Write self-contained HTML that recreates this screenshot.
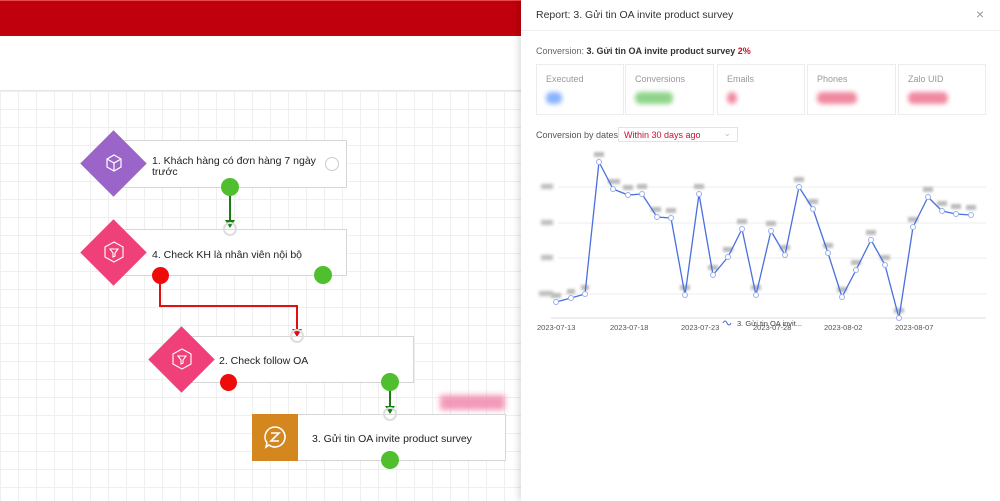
<!DOCTYPE html>
<html><head><meta charset="utf-8"><style>
*{margin:0;padding:0;box-sizing:border-box}
body{width:1000px;height:501px;overflow:hidden;background:#fff;font-family:"Liberation Sans",sans-serif;position:relative}
.hdr{position:absolute;left:0;top:0;width:521px;height:36px;background:#c0000d;border-top:1px solid #e84a4a}
.grid{position:absolute;left:0;top:90px;width:521px;height:411px;border-top:1px solid #e6e6e6;
background-image:linear-gradient(#efefef 1px,transparent 1px),linear-gradient(90deg,#efefef 1px,transparent 1px);background-size:18px 18px;background-position:0 0}
.box{position:absolute;background:#fff;border:1px solid #d6d6d6;font-size:10.5px;color:#222}
.dia{position:absolute;width:47px;height:47px;transform:rotate(45deg)}
.dot{position:absolute;border-radius:50%}
.panel{position:absolute;left:521px;top:0;width:479px;height:501px;background:#fff;box-shadow:-3px 0 6px rgba(0,0,0,.12)}
.card{position:absolute;top:64px;height:51px;border:1px solid #ececec;font-size:9px;color:#999}
.card span{position:absolute;left:9px;top:9px}
.card i{position:absolute;left:9px;top:27px;height:12px;border-radius:5px;filter:blur(2.5px)}
</style></head><body>
<div class="hdr"></div>
<div class="grid"></div>

<svg style="position:absolute;left:0;top:0" width="521" height="501">
<path d="M230 192V222" stroke="#1a7d12" stroke-width="2"/><path d="M225 220l5 8 5-8z" fill="#1a7d12"/>
<path d="M160 283V306H297V330" stroke="#e01010" stroke-width="2" fill="none"/><path d="M292 329l5 8 5-8z" fill="#e01010"/>
<path d="M390 388V408" stroke="#1a7d12" stroke-width="2"/><path d="M385 406l5 8 5-8z" fill="#1a7d12"/>
</svg>

<div class="box" style="left:120px;top:140px;width:227px;height:48px"><div style="position:absolute;left:31px;top:15px;line-height:11px">1. Khách hàng có đơn hàng 7 ngày<br>trước</div></div>
<div class="dot" style="left:325px;top:157px;width:14px;height:14px;border:1.5px solid #ccc;background:#fff"></div>
<div class="dia" style="left:90px;top:140px;background:#9a64c8"></div>
<svg style="position:absolute;left:104px;top:153px" width="20" height="20" viewBox="0 0 20 20" fill="none" stroke="#fff" stroke-width="1.2"><path d="M10 2l7 4v8l-7 4-7-4V6z M3 6l7 4 7-4 M10 10v8"/></svg>
<div class="dot" style="left:221px;top:178px;width:18px;height:18px;background:#4fbf2e"></div>

<div class="box" style="left:120px;top:229px;width:227px;height:47px"><div style="position:absolute;left:31px;top:19px">4. Check KH là nhân viên nội bộ</div></div>
<div class="dot" style="left:223px;top:222px;width:14px;height:14px;border:2px solid #ddd;background:transparent"></div>
<div class="dia" style="left:90px;top:229px;background:#f0407a"></div>
<svg style="position:absolute;left:103px;top:241px" width="22" height="22" viewBox="0 0 22 22" fill="none" stroke="#fff" stroke-width="1.1"><path d="M11 1l9 5v10l-9 5-9-5V6z"/><path d="M7 8h8l-3 4v3l-2 1v-4z"/></svg>
<div class="dot" style="left:152px;top:267px;width:17px;height:17px;background:#ee0b0b"></div>
<div class="dot" style="left:314px;top:266px;width:18px;height:18px;background:#4fbf2e"></div>

<div class="box" style="left:188px;top:336px;width:226px;height:47px"><div style="position:absolute;left:30px;top:18px">2. Check follow OA</div></div>
<div class="dot" style="left:290px;top:329px;width:14px;height:14px;border:2px solid #ddd"></div>
<div class="dia" style="left:158px;top:336px;background:#f0407a"></div>
<svg style="position:absolute;left:171px;top:348px" width="22" height="22" viewBox="0 0 22 22" fill="none" stroke="#fff" stroke-width="1.1"><path d="M11 1l9 5v10l-9 5-9-5V6z"/><path d="M7 8h8l-3 4v3l-2 1v-4z"/></svg>
<div class="dot" style="left:220px;top:374px;width:17px;height:17px;background:#ee0b0b"></div>
<div class="dot" style="left:381px;top:373px;width:18px;height:18px;background:#4fbf2e"></div>

<div style="position:absolute;left:440px;top:395px;width:65px;height:15px;background:#f080a8;filter:blur(3px);opacity:.8"></div>
<div class="box" style="left:252px;top:414px;width:254px;height:47px"><div style="position:absolute;left:59px;top:18px">3. Gửi tin OA invite product survey</div></div>
<div style="position:absolute;left:252px;top:414px;width:46px;height:47px;background:#d4861f"></div>
<svg style="position:absolute;left:262px;top:424px" width="26" height="26" viewBox="0 0 26 26" fill="none" stroke="#fff" stroke-width="1.6"><path d="M13 3a10 10 0 1 1-6 18l-3 2 1-4A10 10 0 0 1 13 3z"/><path d="M9 9h8l-8 8h8"/></svg>
<div class="dot" style="left:383px;top:407px;width:14px;height:14px;border:2px solid #ddd"></div>
<div class="dot" style="left:381px;top:451px;width:18px;height:18px;background:#4fbf2e"></div>

<div class="panel">
<div style="position:absolute;left:15px;top:9px;font-size:10.5px;color:#333">Report: 3. Gửi tin OA invite product survey</div>
<div style="position:absolute;left:455px;top:6px;font-size:14px;color:#999">×</div>
<div style="position:absolute;left:0;top:30px;width:479px;border-top:1px solid #eee"></div>
<div style="position:absolute;left:15px;top:46px;font-size:9px;color:#666">Conversion: <b style="color:#333">3. Gửi tin OA invite product survey</b> <b style="color:#c8102e">2%</b></div>
<div class="card" style="left:15px;width:88px"><span>Executed</span><i style="width:16px;background:#8ab4ff"></i></div>
<div class="card" style="left:104px;width:89px"><span>Conversions</span><i style="width:38px;background:#8fd48a"></i></div>
<div class="card" style="left:196px;width:88px"><span>Emails</span><i style="width:10px;background:#f08aa0"></i></div>
<div class="card" style="left:286px;width:89px"><span>Phones</span><i style="width:40px;background:#f08aa0"></i></div>
<div class="card" style="left:377px;width:88px"><span>Zalo UID</span><i style="width:40px;background:#f08aa0"></i></div>
<div style="position:absolute;left:15px;top:130px;font-size:9px;color:#555">Conversion by dates</div>
<div style="position:absolute;left:97px;top:127px;width:120px;height:15px;border:1px solid #e3e3e3;font-size:9px;color:#c8102e;padding:2px 5px">Within 30 days ago<span style="position:absolute;right:6px;top:0;color:#bbb">⌄</span></div>
</div>

<svg style="position:absolute;left:521px;top:140px" width="479" height="200">
<g stroke="#eee"><path d="M37 47H465M37 83H465M37 118H465M37 154H465"/><path d="M30 178H465" stroke="#ddd"/></g>
<g fill="#bbb" style="filter:blur(1.5px)"><rect x="20" y="44" width="12" height="5"/><rect x="20" y="80" width="12" height="5"/><rect x="20" y="115" width="12" height="5"/><rect x="18" y="151" width="14" height="5"/></g>
<g fill="#bbb" style="filter:blur(1.2px)" id="lbl">
<rect x="30" y="153" width="10" height="5"/><rect x="46" y="149" width="8" height="5"/><rect x="60" y="145" width="8" height="5"/><rect x="73" y="12" width="10" height="5"/><rect x="87" y="39" width="12" height="5"/><rect x="102" y="45" width="10" height="5"/><rect x="116" y="44" width="10" height="5"/><rect x="130" y="67" width="10" height="5"/><rect x="145" y="68" width="10" height="5"/><rect x="159" y="145" width="10" height="5"/><rect x="173" y="44" width="10" height="5"/><rect x="187" y="125" width="10" height="5"/><rect x="202" y="107" width="10" height="5"/><rect x="216" y="79" width="10" height="5"/><rect x="230" y="145" width="10" height="5"/><rect x="245" y="81" width="10" height="5"/><rect x="259" y="105" width="10" height="5"/><rect x="273" y="37" width="10" height="5"/><rect x="287" y="59" width="10" height="5"/><rect x="302" y="103" width="10" height="5"/><rect x="316" y="147" width="10" height="5"/><rect x="330" y="120" width="10" height="5"/><rect x="345" y="90" width="10" height="5"/><rect x="359" y="115" width="10" height="5"/><rect x="373" y="168" width="10" height="5"/><rect x="387" y="77" width="10" height="5"/><rect x="402" y="47" width="10" height="5"/><rect x="416" y="61" width="10" height="5"/><rect x="430" y="64" width="10" height="5"/><rect x="445" y="65" width="10" height="5"/></g>
<polyline fill="none" stroke="#4a6fe0" stroke-width="1.3" stroke-linejoin="round" points="35,162 50,158 64,154 78,22 92,49 107,55 121,54 136,77 150,78 164,155 178,54 192,135 207,117 221,89 235,155 250,91 264,115 278,47 292,69 307,113 321,157 335,130 350,100 364,125 378,178 392,87 407,57 421,71 435,74 450,75"/>
<g fill="#fff" stroke="#9ab0ee" stroke-width="1"><circle cx="35" cy="162" r="2.5"/><circle cx="50" cy="158" r="2.5"/><circle cx="64" cy="154" r="2.5"/><circle cx="78" cy="22" r="2.5"/><circle cx="92" cy="49" r="2.5"/><circle cx="107" cy="55" r="2.5"/><circle cx="121" cy="54" r="2.5"/><circle cx="136" cy="77" r="2.5"/><circle cx="150" cy="78" r="2.5"/><circle cx="164" cy="155" r="2.5"/><circle cx="178" cy="54" r="2.5"/><circle cx="192" cy="135" r="2.5"/><circle cx="207" cy="117" r="2.5"/><circle cx="221" cy="89" r="2.5"/><circle cx="235" cy="155" r="2.5"/><circle cx="250" cy="91" r="2.5"/><circle cx="264" cy="115" r="2.5"/><circle cx="278" cy="47" r="2.5"/><circle cx="292" cy="69" r="2.5"/><circle cx="307" cy="113" r="2.5"/><circle cx="321" cy="157" r="2.5"/><circle cx="335" cy="130" r="2.5"/><circle cx="350" cy="100" r="2.5"/><circle cx="364" cy="125" r="2.5"/><circle cx="378" cy="178" r="2.5"/><circle cx="392" cy="87" r="2.5"/><circle cx="407" cy="57" r="2.5"/><circle cx="421" cy="71" r="2.5"/><circle cx="435" cy="74" r="2.5"/><circle cx="450" cy="75" r="2.5"/></g>
<g fill="#555" font-size="7.5" font-family="Liberation Sans"><text x="16" y="190">2023-07-13</text><text x="89" y="190">2023-07-18</text><text x="160" y="190">2023-07-23</text><text x="232" y="190">2023-07-28</text><text x="303" y="190">2023-08-02</text><text x="374" y="190">2023-08-07</text>
<text x="216" y="186" fill="#444">3. Gửi tin OA invit...</text></g>
<path d="M202 183q2-4 4 0t4 0" stroke="#4a6fe0" fill="none"/>
</svg>
</body></html>
